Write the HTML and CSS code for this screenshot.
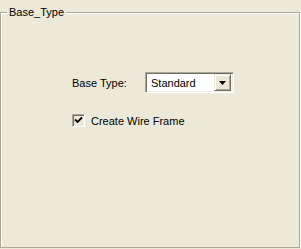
FILE: index.html
```html
<!DOCTYPE html>
<html lang="en">
<head>
    <meta charset="UTF-8">
    <title>Base_Type</title>
    <link rel="stylesheet" href="styles.css">
</head>
<body>
    <fieldset class="group">
        <legend class="group-title">Base_Type</legend>
        <div class="form">
            <div class="form-row">
                <span class="label">Base Type:</span>
                <div class="combo">
                    <span class="combo-value">Standard</span>
                    <span class="combo-btn">
                        <svg width="7" height="4" viewBox="0 0 7 4"><path d="M0 0H7L3.5 4Z" fill="#000"/></svg>
                    </span>
                </div>
            </div>
            <label class="check-row">
                <span class="check-box">
                    <svg width="9" height="9" viewBox="0 0 9 9"><path d="M1 3.5L3.5 6L8 1.5" fill="none" stroke="#000" stroke-width="1.8"/></svg>
                </span>
                <span class="check-text">Create Wire Frame</span>
            </label>
        </div>
    </fieldset>
</body>
</html>
```

FILE: styles.css
```css
body {
    margin: 0;
    background-color: #ece9d8;
    font-family: "Liberation Sans", Arial, sans-serif;
    font-size: 11px;
    color: #000;
}
.group {
    box-sizing: border-box;
    width: 300px;
    height: 242px;
    margin: 6px 0 0 0;
    padding: 0;
    border: 1px solid #aca899;
    box-shadow: inset 1px 1px 0 #fff, 1px 1px 0 #fff;
}
.group-title {
    margin-left: 6px;
    padding: 0 2px;
    background-color: #ece9d8;
    line-height: 13px;
}
.form {
    padding: 53px 0 0 71px;
}
.form-row {
    display: flex;
    align-items: center;
    height: 21px;
}
.label {
    width: 73px;
}
.combo {
    box-sizing: border-box;
    display: flex;
    align-items: center;
    width: 89px;
    height: 21px;
    background-color: #fff;
    border: 1px solid;
    border-color: #aca899 #fff #fff #aca899;
    box-shadow: inset 1px 1px 0 #716f64, inset -1px -1px 0 #f1efe2;
    padding: 2px;
}
.combo-value {
    flex: 1;
    padding-left: 3px;
}
.combo-btn {
    box-sizing: border-box;
    display: flex;
    align-items: center;
    justify-content: center;
    width: 17px;
    height: 17px;
    background-color: #ece9d8;
    border: 1px solid;
    border-color: #ece9d8 #716f64 #716f64 #ece9d8;
    box-shadow: inset 1px 1px 0 #fff, inset -1px -1px 0 #aca899;
}
.check-row {
    display: flex;
    align-items: center;
    margin-top: 20px;
    height: 15px;
}
.check-box {
    box-sizing: border-box;
    display: flex;
    align-items: center;
    justify-content: center;
    width: 13px;
    height: 13px;
    background-color: #ece9d8;
    border: 1px solid;
    border-color: #aca899 #fff #fff #aca899;
    box-shadow: inset 1px 1px 0 #716f64, inset -1px -1px 0 #f1efe2;
}
.check-text {
    margin-left: 6px;
}
```
